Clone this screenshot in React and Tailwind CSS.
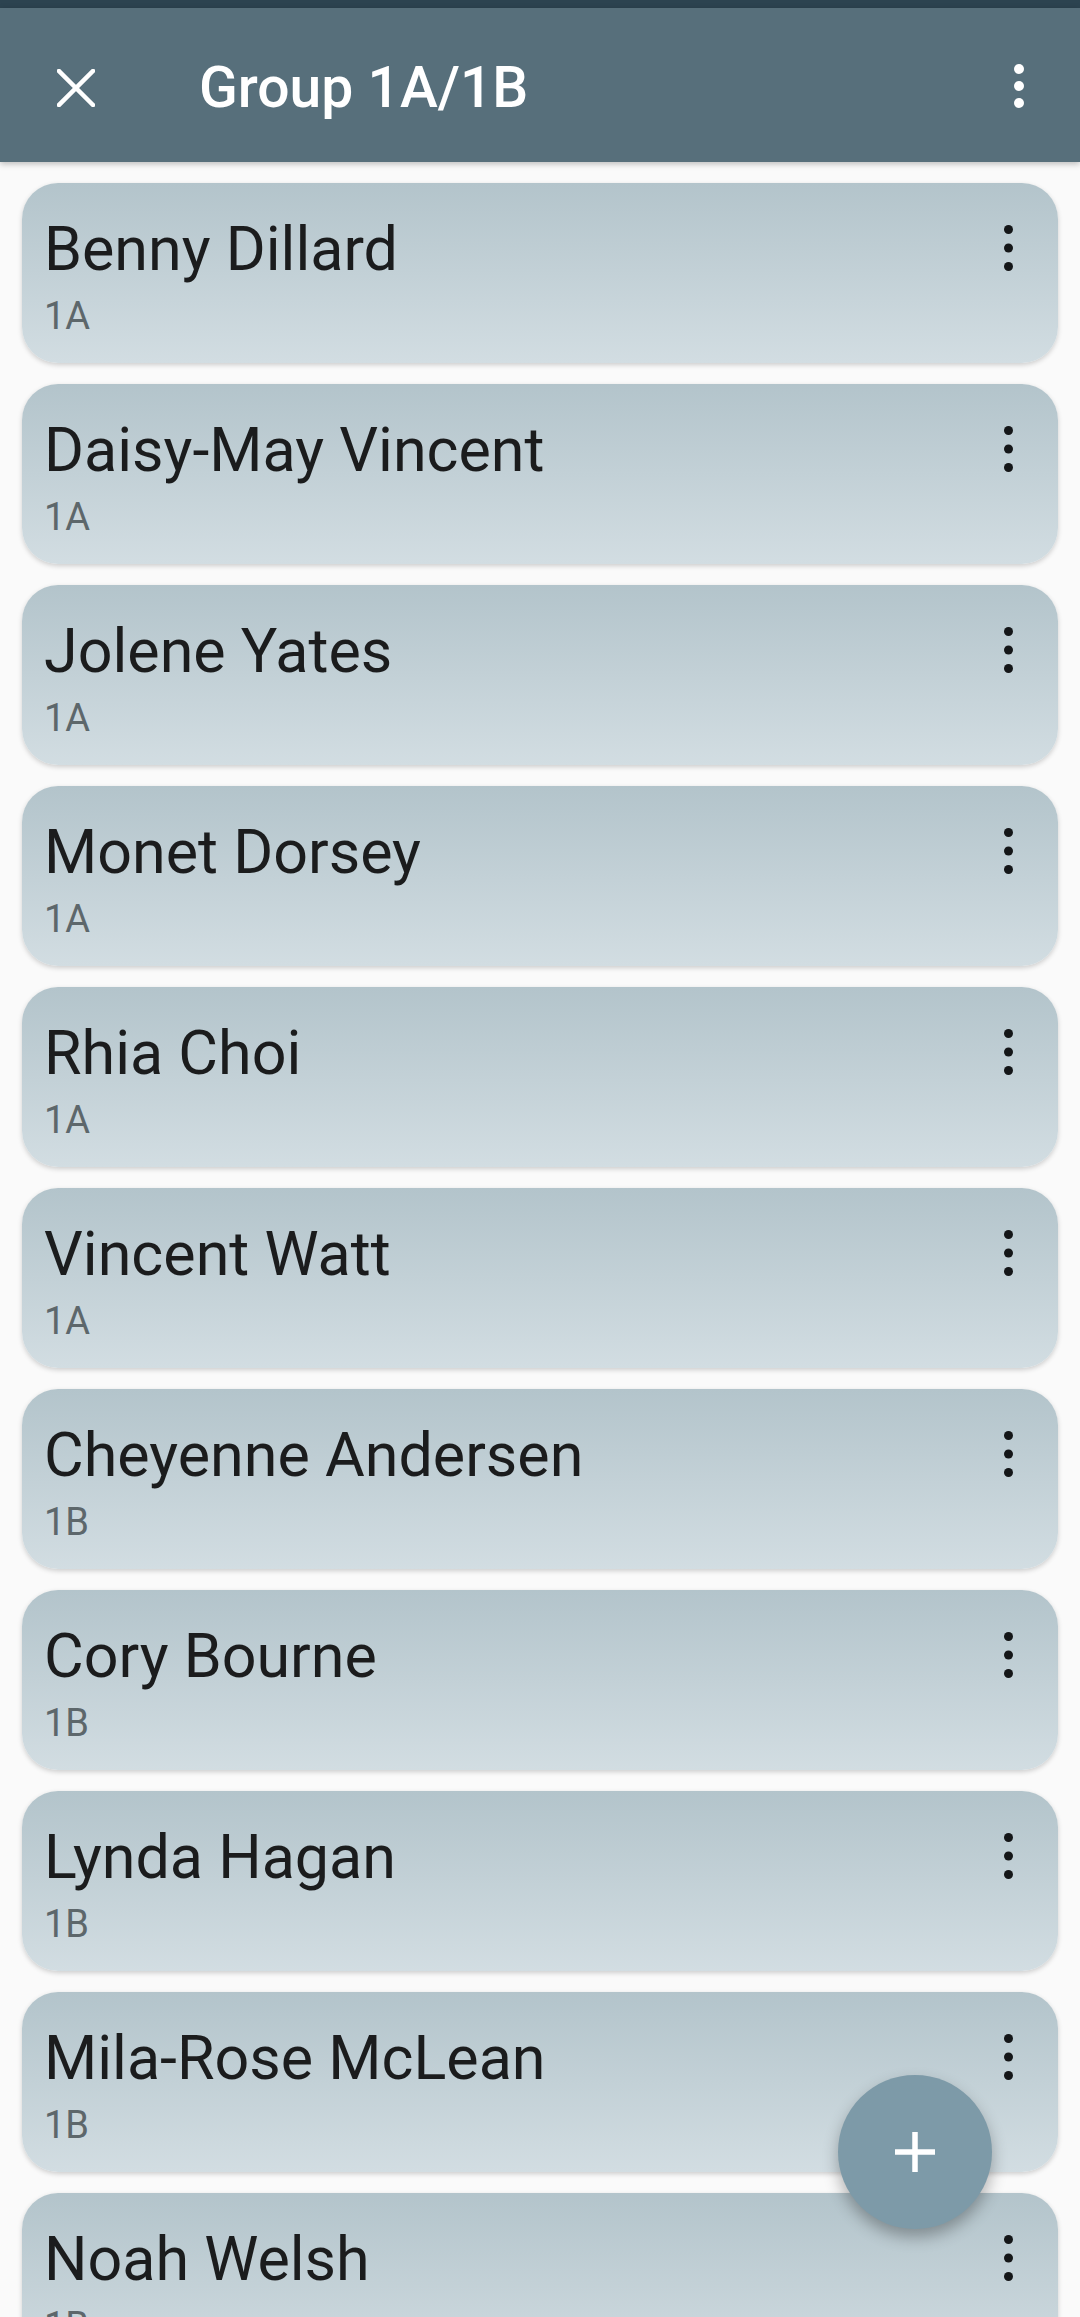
import React from "react";

const students = [
  { name: "Benny Dillard", group: "1A" },
  { name: "Daisy-May Vincent", group: "1A" },
  { name: "Jolene Yates", group: "1A" },
  { name: "Monet Dorsey", group: "1A" },
  { name: "Rhia Choi", group: "1A" },
  { name: "Vincent Watt", group: "1A" },
  { name: "Cheyenne Andersen", group: "1B" },
  { name: "Cory Bourne", group: "1B" },
  { name: "Lynda Hagan", group: "1B" },
  { name: "Mila-Rose McLean", group: "1B" },
  { name: "Noah Welsh", group: "1B" },
];

// vertical three dots
function Kebab({ color, r, gap }) {
  const h = gap * 2 + r * 2;
  return (
    <svg width={r * 2} height={h} viewBox={`0 0 ${r * 2} ${h}`}>
      <circle cx={r} cy={r} r={r} fill={color} />
      <circle cx={r} cy={r + gap} r={r} fill={color} />
      <circle cx={r} cy={r + gap * 2} r={r} fill={color} />
    </svg>
  );
}

function StudentCard({ name, group }) {
  return (
    <div className="relative h-[180px] shrink-0 rounded-[36px] bg-gradient-to-b from-[#b3c4cb] to-[#d2dde2] pl-[22px] pt-[32px] shadow-[0_2px_5px_rgba(0,0,0,0.18)]">
      <div className="text-[61px] leading-[68px] text-[#1b1c1d]">{name}</div>
      <div className="mt-[11px] text-[38px] leading-[44px] text-[#5d676b]">{group}</div>
      {/* card menu */}
      <div className="absolute right-[45px] top-[42px]">
        <Kebab color="#141618" r={4.5} gap={18.5} />
      </div>
    </div>
  );
}

export default function App() {
  return (
    <div
      className="relative h-[2317px] w-[1080px] overflow-hidden bg-[#fafafa]"
      style={{ fontFamily: "Roboto, 'Noto Sans', sans-serif" }}
    >
      {/* status strip */}
      <div className="h-[8px] bg-[#2c4350]" />

      {/* App bar */}
      <div className="relative z-10 flex h-[154px] items-center bg-[#576f7b] shadow-[0_2px_6px_rgba(0,0,0,0.25)]">
        <div className="flex w-[154px] items-center justify-center pt-[5px]">
          <svg width="38" height="38" viewBox="0 0 38 38" className="ml-[-2px]">
            <path d="M2 2 L36 36 M36 2 L2 36" stroke="#ffffff" strokeWidth="4.5" strokeLinecap="square" />
          </svg>
        </div>
        <div className="ml-[45px] pt-[5px] text-[57px] font-medium leading-none text-white">Group 1A/1B</div>
        <div className="ml-auto mr-[56px] pt-[2px]">
          <Kebab color="#ffffff" r={5} gap={17} />
        </div>
      </div>

      {/* Student list */}
      <div className="flex flex-col gap-[21px] pl-[22px] pr-[22px] pt-[21px]">
        {students.map((s) => (
          <StudentCard key={s.name} name={s.name} group={s.group} />
        ))}
      </div>

      {/* FAB */}
      <button className="absolute bottom-[88px] right-[88px] flex h-[154px] w-[154px] items-center justify-center rounded-full bg-[#7d9aa8] shadow-[0_8px_16px_rgba(0,0,0,0.3)]">
        <svg width="42" height="42" viewBox="0 0 42 42">
          <path d="M21 1 V41 M1 21 H41" stroke="#ffffff" strokeWidth="5.5" />
        </svg>
      </button>
    </div>
  );
}
